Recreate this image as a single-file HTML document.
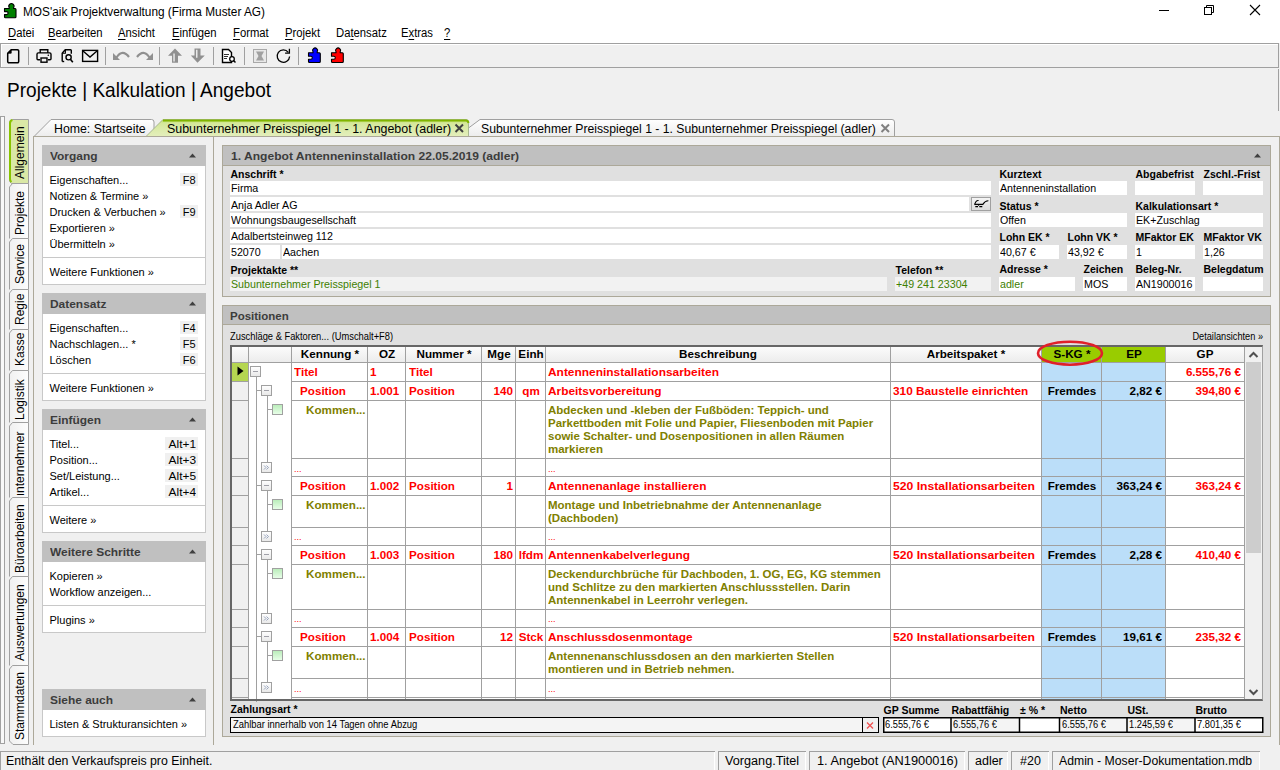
<!DOCTYPE html>
<html><head><meta charset="utf-8"><title>MOS'aik</title>
<style>
html,body{margin:0;padding:0}
body{width:1280px;height:770px;overflow:hidden;position:relative;background:#f0f0f0;font-family:"Liberation Sans",sans-serif;color:#000}
.a{position:absolute;box-sizing:border-box}
.t{white-space:nowrap}
svg{position:absolute;overflow:visible}
</style></head><body>
<div class="a" style="left:0px;top:0px;width:1280px;height:43px;background:#fff"></div>
<svg style="left:0;top:0" width="22" height="22"><path d="M4.5 8.5H9.2V7.6A2.6 2.6 0 1 1 13.6 7.6V8.5H15a1 1 0 0 1 1 1V16.8a1 1 0 0 1-1 1H5.5a1 1 0 0 1-1-1V14.6H6.6a1.5 1.5 0 0 0 0-3H4.5z" fill="#008000" stroke="#000" stroke-width="1.1" stroke-linejoin="round"/></svg>
<div class="a t" style="left:23px;top:6px;font-size:12px;line-height:12px;color:#000;transform:scaleX(0.985);transform-origin:0 0;">MOS&#x27;aik Projektverwaltung (Firma Muster AG)</div>
<div class="a" style="left:1159px;top:10px;width:10px;height:1px;background:#000"></div>
<svg style="left:1200px;top:0" width="20" height="20"><rect x="4.5" y="7.5" width="7" height="7" fill="none" stroke="#000"/><path d="M6.5 7.5v-2h7v7h-2" fill="none" stroke="#000"/></svg>
<svg style="left:1245px;top:0" width="20" height="20"><path d="M5 5L15 15M15 5L5 15" stroke="#000" stroke-width="1.1"/></svg>
<div class="a t" style="left:7.5px;top:27px;font-size:12px;line-height:12px;color:#000;transform:scaleX(0.94);transform-origin:0 0;text-decoration-thickness:1px;text-underline-offset:2px;"><u>D</u>atei</div>
<div class="a t" style="left:48.4px;top:27px;font-size:12px;line-height:12px;color:#000;transform:scaleX(0.94);transform-origin:0 0;text-decoration-thickness:1px;text-underline-offset:2px;"><u>B</u>earbeiten</div>
<div class="a t" style="left:118.2px;top:27px;font-size:12px;line-height:12px;color:#000;transform:scaleX(0.94);transform-origin:0 0;text-decoration-thickness:1px;text-underline-offset:2px;"><u>A</u>nsicht</div>
<div class="a t" style="left:172.2px;top:27px;font-size:12px;line-height:12px;color:#000;transform:scaleX(0.94);transform-origin:0 0;text-decoration-thickness:1px;text-underline-offset:2px;"><u>E</u>infügen</div>
<div class="a t" style="left:233px;top:27px;font-size:12px;line-height:12px;color:#000;transform:scaleX(0.94);transform-origin:0 0;text-decoration-thickness:1px;text-underline-offset:2px;"><u>F</u>ormat</div>
<div class="a t" style="left:285px;top:27px;font-size:12px;line-height:12px;color:#000;transform:scaleX(0.94);transform-origin:0 0;text-decoration-thickness:1px;text-underline-offset:2px;"><u>P</u>rojekt</div>
<div class="a t" style="left:336.3px;top:27px;font-size:12px;line-height:12px;color:#000;transform:scaleX(0.94);transform-origin:0 0;text-decoration-thickness:1px;text-underline-offset:2px;">Da<u>t</u>ensatz</div>
<div class="a t" style="left:401.2px;top:27px;font-size:12px;line-height:12px;color:#000;transform:scaleX(0.94);transform-origin:0 0;text-decoration-thickness:1px;text-underline-offset:2px;">E<u>x</u>tras</div>
<div class="a t" style="left:444.3px;top:27px;font-size:12px;line-height:12px;color:#000;transform:scaleX(0.94);transform-origin:0 0;text-decoration-thickness:1px;text-underline-offset:2px;"><u>?</u></div>
<div class="a" style="left:0px;top:43px;width:1279px;height:25px;border:1px solid #a0a0a0;border-right:none;background:#f0f0f0;box-shadow:inset 1px 1px 0 #fff"></div>
<div class="a" style="left:1278px;top:43px;width:1px;height:25px;background:#a0a0a0"></div>
<div class="a" style="left:28px;top:47px;width:1px;height:18px;background:#a0a0a0"></div>
<div class="a" style="left:105px;top:47px;width:1px;height:18px;background:#a0a0a0"></div>
<div class="a" style="left:159px;top:47px;width:1px;height:18px;background:#a0a0a0"></div>
<div class="a" style="left:213px;top:47px;width:1px;height:18px;background:#a0a0a0"></div>
<div class="a" style="left:244px;top:47px;width:1px;height:18px;background:#a0a0a0"></div>
<div class="a" style="left:298px;top:47px;width:1px;height:18px;background:#a0a0a0"></div>
<svg style="left:0;top:40px" width="30" height="30"><path d="M11.2 9.7h6.3a1.2 1.2 0 0 1 1.2 1.2v10.7a1.2 1.2 0 0 1-1.2 1.2h-8.6a1.2 1.2 0 0 1-1.2-1.2v-8.4z" fill="none" stroke="#000" stroke-width="1.5" stroke-linejoin="round"/><path d="M7.8 13.2l3.4-3.5v3.5z" fill="#000" stroke="#000" stroke-width="0.8" stroke-linejoin="round"/></svg>
<svg style="left:30px;top:40px" width="30" height="30"><path d="M10.2 13v-3.3h7.6v3.3" fill="none" stroke="#000" stroke-width="1.4"/><path d="M10 19.8h-2a1 1 0 0 1-1-1v-4.6a1.3 1.3 0 0 1 1.3-1.3h11.4a1.3 1.3 0 0 1 1.3 1.3v4.6a1 1 0 0 1-1 1h-2" fill="none" stroke="#000" stroke-width="1.4"/><rect x="11" y="18" width="6" height="4.2" fill="none" stroke="#000" stroke-width="1.4"/><circle cx="18.3" cy="15.2" r="0.8" fill="#000"/></svg>
<svg style="left:55px;top:40px" width="30" height="30"><path d="M7.2 21.5v-8.3l3-3.5h5.3a0.8 0.8 0 0 1 0.8 0.8v3.2" fill="none" stroke="#000" stroke-width="1.4" stroke-linejoin="round"/><path d="M7.4 13.2h3v-3.3" fill="none" stroke="#000" stroke-width="1.1"/><path d="M7.2 21.5h2" stroke="#000" stroke-width="1.4"/><circle cx="13.6" cy="17.3" r="2.6" fill="none" stroke="#000" stroke-width="1.4"/><path d="M15.4 19.3l2.4 3" stroke="#000" stroke-width="1.6"/></svg>
<svg style="left:80px;top:40px" width="30" height="30"><rect x="2.6" y="10.4" width="15" height="11" fill="none" stroke="#000" stroke-width="1.4"/><path d="M3 11l7 6l7-6" fill="none" stroke="#000" stroke-width="1.4"/></svg>
<svg style="left:110px;top:40px" width="50" height="30"><path d="M6.5 17.5Q12.5 8.5 19 17" fill="none" stroke="#909090" stroke-width="2.2"/><path d="M3 13v7h7z" fill="#909090"/><path d="M27 17Q33.5 8.5 39.5 17.5" fill="none" stroke="#909090" stroke-width="2.2"/><path d="M43 13v7h-7z" fill="#909090"/></svg>
<svg style="left:160px;top:40px" width="50" height="30"><path d="M8 15.8L15 8.6L22 15.8H18V22.8H12V15.8z" fill="#909090"/><path d="M13.3 13.5h1.5v8h-1.5z" fill="#e8e8e8"/><path d="M34.5 8.6H40.5V15.6H44.8L37.5 22.8L30.8 15.6H34.5z" fill="#909090"/><path d="M36 9.8h1.5v8h-1.5z" fill="#e8e8e8"/></svg>
<svg style="left:215px;top:40px" width="30" height="30"><path d="M7.5 9.5h6l3 3v10h-9z" fill="#fff" stroke="#000" stroke-width="1.4"/><path d="M9 14.5h5M9 16.5h4M9 18.5h3" stroke="#333" stroke-width="1"/><circle cx="17" cy="19" r="2.3" fill="#fff" stroke="#000" stroke-width="1.3"/><path d="M18.5 20.5l2 2" stroke="#000" stroke-width="1.5"/></svg>
<svg style="left:250px;top:40px" width="30" height="30"><rect x="3.5" y="9.5" width="13" height="13" fill="#e8e8e8" stroke="#a8a8a8" stroke-width="1"/><path d="M6 11.5h8l-2.5 4.5l2.5 4.5h-8l2.5-4.5z" fill="#a0a0a0"/></svg>
<svg style="left:270px;top:40px" width="30" height="30"><path d="M18.3 12.3A6.2 6.2 0 1 0 19.6 16.5" fill="none" stroke="#000" stroke-width="1.3"/><path d="M19.4 8.8v4.3h-4.3" fill="none" stroke="#000" stroke-width="1.3"/></svg>
<svg style="left:303px;top:40px" width="24" height="30"><path d="M5.5 12.8H10V11.8A2.5 2.5 0 1 1 14.2 11.8V12.8H16.3a1 1 0 0 1 1 1V21.5a1 1 0 0 1-1 1H6.5a1 1 0 0 1-1-1V19.2H7.8a1.5 1.5 0 0 0 0-3H5.5z" fill="#0000ff" stroke="#000" stroke-width="1.1" stroke-linejoin="round"/></svg>
<svg style="left:326px;top:40px" width="24" height="30"><path d="M5.5 12.8H10V11.8A2.5 2.5 0 1 1 14.2 11.8V12.8H16.3a1 1 0 0 1 1 1V21.5a1 1 0 0 1-1 1H6.5a1 1 0 0 1-1-1V19.2H7.8a1.5 1.5 0 0 0 0-3H5.5z" fill="#ff0000" stroke="#000" stroke-width="1.1" stroke-linejoin="round"/></svg>
<div class="a t" style="left:7px;top:79px;font-size:21px;line-height:21px;color:#000;transform:scaleX(0.907);transform-origin:0 0;">Projekte | Kalkulation | Angebot</div>
<div class="a" style="left:1278px;top:69px;width:1px;height:42px;background:#a0a0a0"></div>
<div class="a" style="left:0px;top:116px;width:5px;height:628px;border:1px solid #a0a0a0;border-top:none;background:#f8f8f8"></div>
<div class="a" style="left:0px;top:116px;width:5px;height:1px;background:#a0a0a0"></div>
<svg style="left:8px;top:182px" width="22" height="57"><path d="M1.5 56.5V5l3-3.5H20.5V56.5" fill="url(#vtg)" stroke="#a0a0a0" stroke-width="1"/></svg>
<svg style="left:8px;top:237px" width="22" height="53"><path d="M1.5 52.5V5l3-3.5H20.5V52.5" fill="url(#vtg)" stroke="#a0a0a0" stroke-width="1"/></svg>
<svg style="left:8px;top:288px" width="22" height="42"><path d="M1.5 41.5V5l3-3.5H20.5V41.5" fill="url(#vtg)" stroke="#a0a0a0" stroke-width="1"/></svg>
<svg style="left:8px;top:328px" width="22" height="43"><path d="M1.5 42.5V5l3-3.5H20.5V42.5" fill="url(#vtg)" stroke="#a0a0a0" stroke-width="1"/></svg>
<svg style="left:8px;top:369px" width="22" height="54"><path d="M1.5 53.5V5l3-3.5H20.5V53.5" fill="url(#vtg)" stroke="#a0a0a0" stroke-width="1"/></svg>
<svg style="left:8px;top:421px" width="22" height="77"><path d="M1.5 76.5V5l3-3.5H20.5V76.5" fill="url(#vtg)" stroke="#a0a0a0" stroke-width="1"/></svg>
<svg style="left:8px;top:496px" width="22" height="81"><path d="M1.5 80.5V5l3-3.5H20.5V80.5" fill="url(#vtg)" stroke="#a0a0a0" stroke-width="1"/></svg>
<svg style="left:8px;top:575px" width="22" height="91"><path d="M1.5 90.5V5l3-3.5H20.5V90.5" fill="url(#vtg)" stroke="#a0a0a0" stroke-width="1"/></svg>
<svg style="left:8px;top:664px" width="22" height="82"><path d="M1.5 77V5l3-3.5H20.5V80.5H5z" fill="url(#vtg)" stroke="#a0a0a0" stroke-width="1"/></svg>
<svg width="0" height="0" style="left:0;top:0"><defs><linearGradient id="vtg" x1="0" x2="1" y1="0" y2="0"><stop offset="0" stop-color="#f0f0f0"/><stop offset="1" stop-color="#fdfdfd"/></linearGradient></defs></svg>
<svg style="left:8px;top:118px" width="22" height="66"><path d="M3.5 65.5q-2-1-2-4V5q0-3.5 3-3.5H20.5V65.5z" fill="#dae8a6" stroke="#a0a0a0" stroke-width="1"/><path d="M3.5 64q-1.5-1-1.5-3V5.5q0-3 2.5-3.5" fill="none" stroke="#88c400" stroke-width="2"/></svg>
<div class="a t" style="left:13.84px;top:179px;font-size:12px;line-height:12px;transform:rotate(-90deg);transform-origin:0 0">Allgemein</div>
<div class="a t" style="left:13.84px;top:235px;font-size:12px;line-height:12px;transform:rotate(-90deg);transform-origin:0 0">Projekte</div>
<div class="a t" style="left:13.84px;top:284px;font-size:12px;line-height:12px;transform:rotate(-90deg);transform-origin:0 0">Service</div>
<div class="a t" style="left:13.84px;top:325px;font-size:12px;line-height:12px;transform:rotate(-90deg);transform-origin:0 0">Regie</div>
<div class="a t" style="left:13.84px;top:366px;font-size:12px;line-height:12px;transform:rotate(-90deg);transform-origin:0 0">Kasse</div>
<div class="a t" style="left:13.84px;top:420px;font-size:12px;line-height:12px;transform:rotate(-90deg);transform-origin:0 0">Logistik</div>
<div class="a" style="left:9px;top:423px;width:19px;height:72px;overflow:hidden"><div class="a t" style="left:5px;top:97.5px;font-size:12px;line-height:12px;transform:rotate(-90deg);transform-origin:0 0">Subunternehmer</div></div>
<div class="a t" style="left:13.84px;top:573px;font-size:12px;line-height:12px;transform:rotate(-90deg);transform-origin:0 0">Büroarbeiten</div>
<div class="a t" style="left:13.84px;top:661px;font-size:12px;line-height:12px;transform:rotate(-90deg);transform-origin:0 0">Auswertungen</div>
<div class="a t" style="left:13.84px;top:740px;font-size:12px;line-height:12px;transform:rotate(-90deg);transform-origin:0 0">Stammdaten</div>
<div class="a" style="left:33px;top:136px;width:1px;height:609px;background:#aca899"></div>
<div class="a" style="left:33px;top:136px;width:1247px;height:1px;background:#aca899"></div>
<div class="a" style="left:1279px;top:136px;width:1px;height:609px;background:#aca899"></div>
<svg style="left:30px;top:115px" width="880" height="24">
<defs>
<linearGradient id="tg1" x1="0" x2="0" y1="0" y2="1"><stop offset="0" stop-color="#ffffff"/><stop offset="1" stop-color="#ececec"/></linearGradient>
<linearGradient id="tg2" x1="0" x2="0" y1="0" y2="1"><stop offset="0" stop-color="#b4d84a"/><stop offset="0.2" stop-color="#d4e79a"/><stop offset="1" stop-color="#e4efbc"/></linearGradient>
</defs>
<path d="M4 21.5L21 4.5H121.5q2.5 0 2.5 2.5V21.5" fill="url(#tg1)" stroke="#a0a0a0" stroke-width="1"/>
<path d="M427 21.5L450 4.5H862q2.5 0 2.5 2.5V21.5" fill="url(#tg1)" stroke="#a0a0a0" stroke-width="1"/>
<path d="M116 21.5L133 4.5H436q2.5 0 2.5 2.5V21.5z" fill="url(#tg2)" stroke="#a8b890" stroke-width="1"/>
<path d="M133 5.5H436q2 0 2.5 2.5" fill="none" stroke="#80b400" stroke-width="2"/>
</svg>
<div class="a" style="left:33px;top:136px;width:1247px;height:1px;background:#aca899"></div>
<div class="a t" style="left:54.2px;top:123px;font-size:12px;line-height:12px;color:#000;transform:scaleX(1.026);transform-origin:0 0;">Home: Startseite</div>
<div class="a t" style="left:166.6px;top:123px;font-size:12px;line-height:12px;color:#000;transform:scaleX(1.036);transform-origin:0 0;">Subunternehmer Preisspiegel 1 - 1. Angebot (adler)</div>
<div class="a t" style="left:481.3px;top:123px;font-size:12px;line-height:12px;color:#000;transform:scaleX(1.017);transform-origin:0 0;">Subunternehmer Preisspiegel 1 - 1. Subunternehmer Preisspiegel (adler)</div>
<svg style="left:454px;top:123px" width="12" height="12"><path d="M1.5 1.5L9 9M9 1.5L1.5 9" stroke="#404040" stroke-width="2"/></svg>
<svg style="left:880px;top:123px" width="12" height="12"><path d="M1.5 1.5L9 9M9 1.5L1.5 9" stroke="#808080" stroke-width="2"/></svg>
<div class="a" style="left:213px;top:137px;width:1px;height:608px;background:#aca899"></div>
<div class="a" style="left:42px;top:145px;width:164px;height:21px;background:#c0c0c0"></div>
<div class="a t" style="left:49.7px;top:151px;font-size:11px;line-height:11px;color:#3c3c3c;font-weight:bold;transform:scaleX(1.085);transform-origin:0 0;">Vorgang</div>
<svg style="left:186px;top:151px" width="12" height="8"><path d="M3 6.5h7l-3.5-4z" fill="#404040"/></svg>
<div class="a" style="left:42px;top:166px;width:164px;height:119px;border:1px solid #c8c8c8;border-top:none;background:#fff"></div>
<div class="a t" style="left:49.5px;top:175px;font-size:11px;line-height:11px;color:#000;">Eigenschaften...</div>
<div class="a" style="left:180px;top:173px;width:18px;height:13px;background:#f0f0f0"></div>
<div class="a t" style="left:155.5px;width:40px;text-align:right;top:175px;font-size:11px;line-height:11px;color:#000;transform:scaleX(1.0);transform-origin:100% 0;">F8</div>
<div class="a t" style="left:49.5px;top:191px;font-size:11px;line-height:11px;color:#000;">Notizen &amp; Termine »</div>
<div class="a t" style="left:49.5px;top:207px;font-size:11px;line-height:11px;color:#000;">Drucken &amp; Verbuchen »</div>
<div class="a" style="left:180px;top:205px;width:18px;height:13px;background:#f0f0f0"></div>
<div class="a t" style="left:155.5px;width:40px;text-align:right;top:207px;font-size:11px;line-height:11px;color:#000;transform:scaleX(1.0);transform-origin:100% 0;">F9</div>
<div class="a t" style="left:49.5px;top:223px;font-size:11px;line-height:11px;color:#000;">Exportieren »</div>
<div class="a t" style="left:49.5px;top:239px;font-size:11px;line-height:11px;color:#000;">Übermitteln »</div>
<div class="a" style="left:43px;top:257px;width:162px;height:1px;background:#c8c8c8"></div>
<div class="a t" style="left:49.5px;top:267px;font-size:11px;line-height:11px;color:#000;">Weitere Funktionen »</div>
<div class="a" style="left:42px;top:293px;width:164px;height:21px;background:#c0c0c0"></div>
<div class="a t" style="left:49.7px;top:299px;font-size:11px;line-height:11px;color:#3c3c3c;font-weight:bold;transform:scaleX(1.085);transform-origin:0 0;">Datensatz</div>
<svg style="left:186px;top:299px" width="12" height="8"><path d="M3 6.5h7l-3.5-4z" fill="#404040"/></svg>
<div class="a" style="left:42px;top:314px;width:164px;height:87px;border:1px solid #c8c8c8;border-top:none;background:#fff"></div>
<div class="a t" style="left:49.5px;top:323px;font-size:11px;line-height:11px;color:#000;">Eigenschaften...</div>
<div class="a" style="left:180px;top:321px;width:18px;height:13px;background:#f0f0f0"></div>
<div class="a t" style="left:155.5px;width:40px;text-align:right;top:323px;font-size:11px;line-height:11px;color:#000;transform:scaleX(1.0);transform-origin:100% 0;">F4</div>
<div class="a t" style="left:49.5px;top:339px;font-size:11px;line-height:11px;color:#000;">Nachschlagen... *</div>
<div class="a" style="left:180px;top:337px;width:18px;height:13px;background:#f0f0f0"></div>
<div class="a t" style="left:155.5px;width:40px;text-align:right;top:339px;font-size:11px;line-height:11px;color:#000;transform:scaleX(1.0);transform-origin:100% 0;">F5</div>
<div class="a t" style="left:49.5px;top:355px;font-size:11px;line-height:11px;color:#000;">Löschen</div>
<div class="a" style="left:180px;top:353px;width:18px;height:13px;background:#f0f0f0"></div>
<div class="a t" style="left:155.5px;width:40px;text-align:right;top:355px;font-size:11px;line-height:11px;color:#000;transform:scaleX(1.0);transform-origin:100% 0;">F6</div>
<div class="a" style="left:43px;top:373px;width:162px;height:1px;background:#c8c8c8"></div>
<div class="a t" style="left:49.5px;top:383px;font-size:11px;line-height:11px;color:#000;">Weitere Funktionen »</div>
<div class="a" style="left:42px;top:409px;width:164px;height:21px;background:#c0c0c0"></div>
<div class="a t" style="left:49.7px;top:415px;font-size:11px;line-height:11px;color:#3c3c3c;font-weight:bold;transform:scaleX(1.085);transform-origin:0 0;">Einfügen</div>
<svg style="left:186px;top:415px" width="12" height="8"><path d="M3 6.5h7l-3.5-4z" fill="#404040"/></svg>
<div class="a" style="left:42px;top:430px;width:164px;height:103px;border:1px solid #c8c8c8;border-top:none;background:#fff"></div>
<div class="a t" style="left:49.5px;top:439px;font-size:11px;line-height:11px;color:#000;">Titel...</div>
<div class="a" style="left:165px;top:437px;width:33px;height:13px;background:#f0f0f0"></div>
<div class="a t" style="left:155.5px;width:40px;text-align:right;top:439px;font-size:11px;line-height:11px;color:#000;transform:scaleX(1.08);transform-origin:100% 0;">Alt+1</div>
<div class="a t" style="left:49.5px;top:455px;font-size:11px;line-height:11px;color:#000;">Position...</div>
<div class="a" style="left:165px;top:453px;width:33px;height:13px;background:#f0f0f0"></div>
<div class="a t" style="left:155.5px;width:40px;text-align:right;top:455px;font-size:11px;line-height:11px;color:#000;transform:scaleX(1.08);transform-origin:100% 0;">Alt+3</div>
<div class="a t" style="left:49.5px;top:471px;font-size:11px;line-height:11px;color:#000;">Set/Leistung...</div>
<div class="a" style="left:165px;top:469px;width:33px;height:13px;background:#f0f0f0"></div>
<div class="a t" style="left:155.5px;width:40px;text-align:right;top:471px;font-size:11px;line-height:11px;color:#000;transform:scaleX(1.08);transform-origin:100% 0;">Alt+5</div>
<div class="a t" style="left:49.5px;top:487px;font-size:11px;line-height:11px;color:#000;">Artikel...</div>
<div class="a" style="left:165px;top:485px;width:33px;height:13px;background:#f0f0f0"></div>
<div class="a t" style="left:155.5px;width:40px;text-align:right;top:487px;font-size:11px;line-height:11px;color:#000;transform:scaleX(1.08);transform-origin:100% 0;">Alt+4</div>
<div class="a" style="left:43px;top:505px;width:162px;height:1px;background:#c8c8c8"></div>
<div class="a t" style="left:49.5px;top:515px;font-size:11px;line-height:11px;color:#000;">Weitere »</div>
<div class="a" style="left:42px;top:541px;width:164px;height:21px;background:#c0c0c0"></div>
<div class="a t" style="left:49.7px;top:547px;font-size:11px;line-height:11px;color:#3c3c3c;font-weight:bold;transform:scaleX(1.085);transform-origin:0 0;">Weitere Schritte</div>
<svg style="left:186px;top:547px" width="12" height="8"><path d="M3 6.5h7l-3.5-4z" fill="#404040"/></svg>
<div class="a" style="left:42px;top:562px;width:164px;height:71px;border:1px solid #c8c8c8;border-top:none;background:#fff"></div>
<div class="a t" style="left:49.5px;top:571px;font-size:11px;line-height:11px;color:#000;">Kopieren »</div>
<div class="a t" style="left:49.5px;top:587px;font-size:11px;line-height:11px;color:#000;">Workflow anzeigen...</div>
<div class="a" style="left:43px;top:605px;width:162px;height:1px;background:#c8c8c8"></div>
<div class="a t" style="left:49.5px;top:615px;font-size:11px;line-height:11px;color:#000;">Plugins »</div>
<div class="a" style="left:42px;top:689px;width:164px;height:21px;background:#c0c0c0"></div>
<div class="a t" style="left:49.7px;top:695px;font-size:11px;line-height:11px;color:#3c3c3c;font-weight:bold;transform:scaleX(1.085);transform-origin:0 0;">Siehe auch</div>
<svg style="left:186px;top:695px" width="12" height="8"><path d="M3 6.5h7l-3.5-4z" fill="#404040"/></svg>
<div class="a" style="left:42px;top:710px;width:164px;height:27px;border:1px solid #c8c8c8;border-top:none;background:#fff"></div>
<div class="a t" style="left:49.5px;top:719px;font-size:11px;line-height:11px;color:#000;">Listen &amp; Strukturansichten »</div>
<div class="a" style="left:0px;top:751px;width:715px;height:19px;border-left:1px solid #a0a0a0;border-top:1px solid #a0a0a0;box-shadow:inset -1px 0 0 #fff"></div>
<div class="a t" style="left:5.5px;top:755px;font-size:12px;line-height:12px;color:#000;transform:scaleX(1.028);transform-origin:0 0;">Enthält den Verkaufspreis pro Einheit.</div>
<div class="a" style="left:718px;top:751px;width:88px;height:19px;border-left:1px solid #a0a0a0;border-top:1px solid #a0a0a0;box-shadow:inset -1px 0 0 #fff"></div>
<div class="a t" style="left:725.3px;top:755px;font-size:12px;line-height:12px;color:#000;transform:scaleX(1.055);transform-origin:0 0;">Vorgang.Titel</div>
<div class="a" style="left:809px;top:751px;width:156px;height:19px;border-left:1px solid #a0a0a0;border-top:1px solid #a0a0a0;box-shadow:inset -1px 0 0 #fff"></div>
<div class="a t" style="left:816.8px;top:755px;font-size:12px;line-height:12px;color:#000;transform:scaleX(1.067);transform-origin:0 0;">1. Angebot (AN1900016)</div>
<div class="a" style="left:968px;top:751px;width:40px;height:19px;border-left:1px solid #a0a0a0;border-top:1px solid #a0a0a0;box-shadow:inset -1px 0 0 #fff"></div>
<div class="a t" style="left:974.9px;top:755px;font-size:12px;line-height:12px;color:#000;transform:scaleX(1.04);transform-origin:0 0;">adler</div>
<div class="a" style="left:1011px;top:751px;width:38px;height:19px;border-left:1px solid #a0a0a0;border-top:1px solid #a0a0a0;box-shadow:inset -1px 0 0 #fff"></div>
<div class="a t" style="left:1019.6px;top:755px;font-size:12px;line-height:12px;color:#000;transform:scaleX(1.04);transform-origin:0 0;">#20</div>
<div class="a" style="left:1052px;top:751px;width:208px;height:19px;border-left:1px solid #a0a0a0;border-top:1px solid #a0a0a0;box-shadow:inset -1px 0 0 #fff"></div>
<div class="a t" style="left:1059.2px;top:755px;font-size:12px;line-height:12px;color:#000;transform:scaleX(1.019);transform-origin:0 0;">Admin - Moser-Dokumentation.mdb</div>
<div class="a" style="left:222px;top:145px;width:1049px;height:152px;border:1px solid #aca899;background:#e0e0e0"></div>
<div class="a" style="left:223px;top:146px;width:1047px;height:20px;background:#c0c0c0;border-bottom:1px solid #aca899"></div>
<div class="a t" style="left:230.5px;top:151px;font-size:11px;line-height:11px;color:#3c3c3c;font-weight:bold;transform:scaleX(1.097);transform-origin:0 0;">1. Angebot Antenneninstallation 22.05.2019 (adler)</div>
<svg style="left:1251px;top:151px" width="12" height="8"><path d="M3 6.5h7l-3.5-4z" fill="#404040"/></svg>
<div class="a t" style="left:230.5px;top:169px;font-size:10.5px;line-height:10.5px;color:#000;font-weight:bold;transform:scaleX(1.0);transform-origin:0 0;">Anschrift *</div>
<div class="a" style="left:230px;top:181px;width:761px;height:14px;background:#fff"></div>
<div class="a t" style="left:230.8px;top:183px;font-size:11px;line-height:11px;color:#000;transform:scaleX(0.97);transform-origin:0 0;">Firma</div>
<div class="a" style="left:230px;top:197px;width:739px;height:14px;background:#fff"></div>
<div class="a t" style="left:230.8px;top:200px;font-size:11px;line-height:11px;color:#000;transform:scaleX(0.97);transform-origin:0 0;">Anja Adler AG</div>
<div class="a" style="left:971px;top:197px;width:20px;height:14px;border:1px solid #a0a0a0;background:linear-gradient(#f4f4f4,#dcdcdc)"></div>
<svg style="left:971px;top:197px" width="20" height="14"><g fill="none" stroke="#000"><path d="M3.8 7.2Q5.2 2.8 7.6 3.6" stroke-width="1.1"/><path d="M3.3 7.4H12.3" stroke-width="1.3"/><path d="M4.3 9.6H7M8.3 9.6H11.3" stroke-width="1.1"/><path d="M7.2 7L7.8 9" stroke-width="0.8"/><path d="M12 7.2Q14.2 3.6 17.4 3.7" stroke-width="1.1"/></g></svg>
<div class="a" style="left:230px;top:213px;width:761px;height:14px;background:#fff"></div>
<div class="a t" style="left:230.8px;top:215px;font-size:11px;line-height:11px;color:#000;transform:scaleX(0.97);transform-origin:0 0;">Wohnungsbaugesellschaft</div>
<div class="a" style="left:230px;top:229px;width:761px;height:14px;background:#fff"></div>
<div class="a t" style="left:230.8px;top:231px;font-size:11px;line-height:11px;color:#000;transform:scaleX(0.97);transform-origin:0 0;">Adalbertsteinweg 112</div>
<div class="a" style="left:230px;top:245px;width:50px;height:14px;background:#fff"></div>
<div class="a t" style="left:230.8px;top:247px;font-size:11px;line-height:11px;color:#000;transform:scaleX(0.97);transform-origin:0 0;">52070</div>
<div class="a" style="left:282px;top:245px;width:709px;height:14px;background:#fff"></div>
<div class="a t" style="left:282.8px;top:247px;font-size:11px;line-height:11px;color:#000;transform:scaleX(0.97);transform-origin:0 0;">Aachen</div>
<div class="a t" style="left:230.5px;top:265px;font-size:10.5px;line-height:10.5px;color:#000;font-weight:bold;transform:scaleX(1.0);transform-origin:0 0;">Projektakte **</div>
<div class="a" style="left:230px;top:277px;width:657px;height:14px;background:#f2f2f2"></div>
<div class="a t" style="left:230.8px;top:279px;font-size:11px;line-height:11px;color:#408000;transform:scaleX(0.97);transform-origin:0 0;">Subunternehmer Preisspiegel 1</div>
<div class="a t" style="left:895.6px;top:265px;font-size:10.5px;line-height:10.5px;color:#000;font-weight:bold;transform:scaleX(1.0);transform-origin:0 0;">Telefon **</div>
<div class="a" style="left:895px;top:277px;width:96px;height:14px;background:#f2f2f2"></div>
<div class="a t" style="left:895.8px;top:279px;font-size:11px;line-height:11px;color:#408000;transform:scaleX(0.97);transform-origin:0 0;">+49 241 23304</div>
<div class="a t" style="left:999.5px;top:169px;font-size:10.5px;line-height:10.5px;color:#000;font-weight:bold;transform:scaleX(1.0);transform-origin:0 0;">Kurztext</div>
<div class="a t" style="left:1135.5px;top:169px;font-size:10.5px;line-height:10.5px;color:#000;font-weight:bold;transform:scaleX(1.0);transform-origin:0 0;">Abgabefrist</div>
<div class="a t" style="left:1203.5px;top:169px;font-size:10.5px;line-height:10.5px;color:#000;font-weight:bold;transform:scaleX(1.0);transform-origin:0 0;">Zschl.-Frist</div>
<div class="a" style="left:999px;top:181px;width:128px;height:14px;background:#fff"></div>
<div class="a t" style="left:999.8px;top:183px;font-size:11px;line-height:11px;color:#000;transform:scaleX(0.97);transform-origin:0 0;">Antenneninstallation</div>
<div class="a" style="left:1135px;top:181px;width:60px;height:14px;background:#fff"></div>
<div class="a" style="left:1203px;top:181px;width:60px;height:14px;background:#fff"></div>
<div class="a t" style="left:999.5px;top:201px;font-size:10.5px;line-height:10.5px;color:#000;font-weight:bold;transform:scaleX(1.0);transform-origin:0 0;">Status *</div>
<div class="a t" style="left:1135.5px;top:201px;font-size:10.5px;line-height:10.5px;color:#000;font-weight:bold;transform:scaleX(1.0);transform-origin:0 0;">Kalkulationsart *</div>
<div class="a" style="left:999px;top:213px;width:128px;height:14px;background:#fff"></div>
<div class="a t" style="left:999.8px;top:215px;font-size:11px;line-height:11px;color:#000;transform:scaleX(0.97);transform-origin:0 0;">Offen</div>
<div class="a" style="left:1135px;top:213px;width:128px;height:14px;background:#fff"></div>
<div class="a t" style="left:1135.8px;top:215px;font-size:11px;line-height:11px;color:#000;transform:scaleX(0.97);transform-origin:0 0;">EK+Zuschlag</div>
<div class="a t" style="left:999.5px;top:232px;font-size:10.5px;line-height:10.5px;color:#000;font-weight:bold;transform:scaleX(1.0);transform-origin:0 0;">Lohn EK *</div>
<div class="a t" style="left:1067.5px;top:232px;font-size:10.5px;line-height:10.5px;color:#000;font-weight:bold;transform:scaleX(1.0);transform-origin:0 0;">Lohn VK *</div>
<div class="a t" style="left:1135.5px;top:232px;font-size:10.5px;line-height:10.5px;color:#000;font-weight:bold;transform:scaleX(1.0);transform-origin:0 0;">MFaktor EK</div>
<div class="a t" style="left:1203.5px;top:232px;font-size:10.5px;line-height:10.5px;color:#000;font-weight:bold;transform:scaleX(1.0);transform-origin:0 0;">MFaktor VK</div>
<div class="a" style="left:999px;top:245px;width:60px;height:14px;background:#fff"></div>
<div class="a t" style="left:999.8px;top:247px;font-size:11px;line-height:11px;color:#000;transform:scaleX(0.97);transform-origin:0 0;">40,67 €</div>
<div class="a" style="left:1067px;top:245px;width:60px;height:14px;background:#fff"></div>
<div class="a t" style="left:1067.8px;top:247px;font-size:11px;line-height:11px;color:#000;transform:scaleX(0.97);transform-origin:0 0;">43,92 €</div>
<div class="a" style="left:1135px;top:245px;width:60px;height:14px;background:#fff"></div>
<div class="a t" style="left:1135.8px;top:247px;font-size:11px;line-height:11px;color:#000;transform:scaleX(0.97);transform-origin:0 0;">1</div>
<div class="a" style="left:1203px;top:245px;width:60px;height:14px;background:#fff"></div>
<div class="a t" style="left:1203.8px;top:247px;font-size:11px;line-height:11px;color:#000;transform:scaleX(0.97);transform-origin:0 0;">1,26</div>
<div class="a t" style="left:999.5px;top:264px;font-size:10.5px;line-height:10.5px;color:#000;font-weight:bold;transform:scaleX(1.0);transform-origin:0 0;">Adresse *</div>
<div class="a t" style="left:1083.5px;top:264px;font-size:10.5px;line-height:10.5px;color:#000;font-weight:bold;transform:scaleX(1.0);transform-origin:0 0;">Zeichen</div>
<div class="a t" style="left:1135.5px;top:264px;font-size:10.5px;line-height:10.5px;color:#000;font-weight:bold;transform:scaleX(1.0);transform-origin:0 0;">Beleg-Nr.</div>
<div class="a t" style="left:1203.5px;top:264px;font-size:10.5px;line-height:10.5px;color:#000;font-weight:bold;transform:scaleX(1.0);transform-origin:0 0;">Belegdatum</div>
<div class="a" style="left:999px;top:277px;width:76px;height:14px;background:#fff"></div>
<div class="a t" style="left:999.8px;top:279px;font-size:11px;line-height:11px;color:#408000;transform:scaleX(0.97);transform-origin:0 0;">adler</div>
<div class="a" style="left:1083px;top:277px;width:44px;height:14px;background:#fff"></div>
<div class="a t" style="left:1083.8px;top:279px;font-size:11px;line-height:11px;color:#000;transform:scaleX(0.97);transform-origin:0 0;">MOS</div>
<div class="a" style="left:1135px;top:277px;width:60px;height:14px;background:#fff"></div>
<div class="a t" style="left:1135.8px;top:279px;font-size:11px;line-height:11px;color:#000;transform:scaleX(0.97);transform-origin:0 0;">AN1900016</div>
<div class="a" style="left:1203px;top:277px;width:60px;height:14px;background:#fff"></div>
<div class="a" style="left:222px;top:305px;width:1049px;height:432px;border:1px solid #aca899;background:#e0e0e0"></div>
<div class="a" style="left:223px;top:306px;width:1047px;height:19px;background:#c0c0c0;border-bottom:1px solid #aca899"></div>
<div class="a t" style="left:230px;top:311px;font-size:11px;line-height:11px;color:#3c3c3c;font-weight:bold;transform:scaleX(1.045);transform-origin:0 0;">Positionen</div>
<div class="a t" style="left:230px;top:332px;font-size:10px;line-height:10px;color:#000;transform:scaleX(0.933);transform-origin:0 0;">Zuschläge &amp; Faktoren... (Umschalt+F8)</div>
<div class="a t" style="left:1143.2px;width:120px;text-align:right;top:332px;font-size:10px;line-height:10px;color:#000;transform:scaleX(0.92);transform-origin:100% 0;">Detailansichten »</div>
<div class="a t" style="left:230.5px;top:704px;font-size:10.5px;line-height:10.5px;color:#000;font-weight:bold;transform:scaleX(1.0);transform-origin:0 0;">Zahlungsart *</div>
<div class="a" style="left:230px;top:717px;width:633px;height:16px;border:1px solid #000;background:#f4f4f4"></div>
<div class="a t" style="left:232.5px;top:720px;font-size:10px;line-height:10px;color:#000;transform:scaleX(0.94);transform-origin:0 0;">Zahlbar innerhalb von 14 Tagen ohne Abzug</div>
<div class="a" style="left:862px;top:717px;width:17px;height:16px;border:1px solid #000;background:#f0f0f0"></div>
<svg style="left:862px;top:717px" width="17" height="16"><path d="M5 5.5l6 6M11 5.5l-6 6" stroke="#f05050" stroke-width="1.3"/></svg>
<div class="a" style="left:883px;top:717px;width:68px;height:16px;background:#fff"></div>
<div class="a t" style="left:883.5px;top:705px;font-size:10.5px;line-height:10.5px;color:#000;font-weight:bold;transform:scaleX(1.0);transform-origin:0 0;">GP Summe</div>
<div class="a t" style="left:885.2px;top:720px;font-size:10px;line-height:10px;color:#000;transform:scaleX(0.93);transform-origin:0 0;">6.555,76 €</div>
<div class="a" style="left:951px;top:717px;width:68.5px;height:16px;background:#f4f4f4"></div>
<div class="a t" style="left:951.5px;top:705px;font-size:10.5px;line-height:10.5px;color:#000;font-weight:bold;transform:scaleX(1.0);transform-origin:0 0;">Rabattfähig</div>
<div class="a t" style="left:953.2px;top:720px;font-size:10px;line-height:10px;color:#000;transform:scaleX(0.93);transform-origin:0 0;">6.555,76 €</div>
<div class="a" style="left:1019.5px;top:717px;width:40.0px;height:16px;background:#fff"></div>
<div class="a t" style="left:1020.0px;top:705px;font-size:10.5px;line-height:10.5px;color:#000;font-weight:bold;transform:scaleX(1.0);transform-origin:0 0;">± % *</div>
<div class="a t" style="left:1021.7px;top:720px;font-size:10px;line-height:10px;color:#000;transform:scaleX(0.93);transform-origin:0 0;"></div>
<div class="a" style="left:1059.5px;top:717px;width:67.5px;height:16px;background:#f4f4f4"></div>
<div class="a t" style="left:1060.0px;top:705px;font-size:10.5px;line-height:10.5px;color:#000;font-weight:bold;transform:scaleX(1.0);transform-origin:0 0;">Netto</div>
<div class="a t" style="left:1061.7px;top:720px;font-size:10px;line-height:10px;color:#000;transform:scaleX(0.93);transform-origin:0 0;">6.555,76 €</div>
<div class="a" style="left:1127px;top:717px;width:68px;height:16px;background:#f4f4f4"></div>
<div class="a t" style="left:1127.5px;top:705px;font-size:10.5px;line-height:10.5px;color:#000;font-weight:bold;transform:scaleX(1.0);transform-origin:0 0;">USt.</div>
<div class="a t" style="left:1129.2px;top:720px;font-size:10px;line-height:10px;color:#000;transform:scaleX(0.93);transform-origin:0 0;">1.245,59 €</div>
<div class="a" style="left:1195px;top:717px;width:68px;height:16px;background:#fff"></div>
<div class="a t" style="left:1195.5px;top:705px;font-size:10.5px;line-height:10.5px;color:#000;font-weight:bold;transform:scaleX(1.0);transform-origin:0 0;">Brutto</div>
<div class="a t" style="left:1197.2px;top:720px;font-size:10px;line-height:10px;color:#000;transform:scaleX(0.93);transform-origin:0 0;">7.801,35 €</div>
<svg style="left:882px;top:716px" width="384" height="18"><g fill="none" stroke="#000" stroke-width="1.5"><rect x="1.75" y="1.75" width="379" height="14.5"/><line x1="69" y1="1" x2="69" y2="17"/><line x1="137.5" y1="1" x2="137.5" y2="17"/><line x1="177.5" y1="1" x2="177.5" y2="17"/><line x1="245" y1="1" x2="245" y2="17"/><line x1="313" y1="1" x2="313" y2="17"/></g></svg>
<div class="a" style="left:230px;top:345px;width:1033px;height:356px;background:#fff"></div>
<div class="a" style="left:1042px;top:362px;width:59px;height:339px;background:#bbdef9"></div>
<div class="a" style="left:1102px;top:362px;width:63px;height:339px;background:#bbdef9"></div>
<div class="a" style="left:232px;top:347px;width:16px;height:354px;background:#f0f0f0"></div>
<div class="a" style="left:232px;top:347px;width:1012px;height:15px;background:linear-gradient(#fbfbfb,#ececec)"></div>
<div class="a" style="left:1042px;top:347px;width:59px;height:15px;background:#99cc00"></div>
<div class="a" style="left:1102px;top:347px;width:63px;height:15px;background:#99cc00"></div>
<div class="a" style="left:232px;top:363px;width:16px;height:18px;background:#b5d651"></div>
<svg style="left:232px;top:363px" width="16" height="18"><path d="M5.5 3.5l6 4.5l-6 4.5z" fill="#000"/></svg>
<div class="a" style="left:232px;top:362px;width:1012px;height:1px;background:#a0a0a0"></div>
<div class="a" style="left:232px;top:381px;width:1012px;height:1px;background:#a0a0a0"></div>
<div class="a" style="left:232px;top:400px;width:1012px;height:1px;background:#a0a0a0"></div>
<div class="a" style="left:232px;top:458px;width:1012px;height:1px;background:#a0a0a0"></div>
<div class="a" style="left:232px;top:476px;width:1012px;height:1px;background:#a0a0a0"></div>
<div class="a" style="left:232px;top:495px;width:1012px;height:1px;background:#a0a0a0"></div>
<div class="a" style="left:232px;top:527px;width:1012px;height:1px;background:#a0a0a0"></div>
<div class="a" style="left:232px;top:545px;width:1012px;height:1px;background:#a0a0a0"></div>
<div class="a" style="left:232px;top:564px;width:1012px;height:1px;background:#a0a0a0"></div>
<div class="a" style="left:232px;top:609px;width:1012px;height:1px;background:#a0a0a0"></div>
<div class="a" style="left:232px;top:627px;width:1012px;height:1px;background:#a0a0a0"></div>
<div class="a" style="left:232px;top:646px;width:1012px;height:1px;background:#a0a0a0"></div>
<div class="a" style="left:232px;top:678px;width:1012px;height:1px;background:#a0a0a0"></div>
<div class="a" style="left:232px;top:697px;width:1012px;height:1px;background:#a0a0a0"></div>
<div class="a" style="left:248px;top:347px;width:1px;height:354px;background:#a0a0a0"></div>
<div class="a" style="left:291px;top:347px;width:1px;height:354px;background:#a0a0a0"></div>
<div class="a" style="left:367px;top:347px;width:1px;height:354px;background:#a0a0a0"></div>
<div class="a" style="left:405px;top:347px;width:1px;height:354px;background:#a0a0a0"></div>
<div class="a" style="left:481px;top:347px;width:1px;height:354px;background:#a0a0a0"></div>
<div class="a" style="left:515px;top:347px;width:1px;height:354px;background:#a0a0a0"></div>
<div class="a" style="left:545px;top:347px;width:1px;height:354px;background:#a0a0a0"></div>
<div class="a" style="left:890px;top:347px;width:1px;height:354px;background:#a0a0a0"></div>
<div class="a" style="left:1041px;top:347px;width:1px;height:354px;background:#a0a0a0"></div>
<div class="a" style="left:1101px;top:347px;width:1px;height:354px;background:#a0a0a0"></div>
<div class="a" style="left:1165px;top:347px;width:1px;height:354px;background:#a0a0a0"></div>
<div class="a" style="left:1244px;top:347px;width:1px;height:354px;background:#a0a0a0"></div>
<div class="a" style="left:249px;top:381px;width:42px;height:1px;background:#fff"></div>
<div class="a" style="left:249px;top:400px;width:42px;height:1px;background:#fff"></div>
<div class="a" style="left:249px;top:458px;width:42px;height:1px;background:#fff"></div>
<div class="a" style="left:249px;top:476px;width:42px;height:1px;background:#fff"></div>
<div class="a" style="left:249px;top:495px;width:42px;height:1px;background:#fff"></div>
<div class="a" style="left:249px;top:527px;width:42px;height:1px;background:#fff"></div>
<div class="a" style="left:249px;top:545px;width:42px;height:1px;background:#fff"></div>
<div class="a" style="left:249px;top:564px;width:42px;height:1px;background:#fff"></div>
<div class="a" style="left:249px;top:609px;width:42px;height:1px;background:#fff"></div>
<div class="a" style="left:249px;top:627px;width:42px;height:1px;background:#fff"></div>
<div class="a" style="left:249px;top:646px;width:42px;height:1px;background:#fff"></div>
<div class="a" style="left:249px;top:678px;width:42px;height:1px;background:#fff"></div>
<div class="a" style="left:249px;top:697px;width:42px;height:1px;background:#fff"></div>
<svg style="left:248px;top:362px" width="44" height="340"><g fill="none" stroke="#a0a0a0" stroke-width="1"><path d="M8.5 15V340"/><path d="M8.5 28.5H13.5"/><path d="M19.5 33.5V105"/><path d="M19.5 47.5H24.5"/><rect x="13.5" y="23.5" width="10" height="10" fill="url(#tgb)"/><rect x="24.5" y="42.5" width="10" height="10" fill="url(#tgg)"/><rect x="13.5" y="100.5" width="10" height="10" fill="url(#tgb)"/><path d="M8.5 123.5H13.5"/><path d="M19.5 128.5V174"/><path d="M19.5 142.5H24.5"/><rect x="13.5" y="118.5" width="10" height="10" fill="url(#tgb)"/><rect x="24.5" y="137.5" width="10" height="10" fill="url(#tgg)"/><rect x="13.5" y="169.5" width="10" height="10" fill="url(#tgb)"/><path d="M8.5 192.5H13.5"/><path d="M19.5 197.5V256"/><path d="M19.5 211.5H24.5"/><rect x="13.5" y="187.5" width="10" height="10" fill="url(#tgb)"/><rect x="24.5" y="206.5" width="10" height="10" fill="url(#tgg)"/><rect x="13.5" y="251.5" width="10" height="10" fill="url(#tgb)"/><path d="M8.5 274.5H13.5"/><path d="M19.5 279.5V325"/><path d="M19.5 293.5H24.5"/><rect x="13.5" y="269.5" width="10" height="10" fill="url(#tgb)"/><rect x="24.5" y="288.5" width="10" height="10" fill="url(#tgg)"/><rect x="13.5" y="320.5" width="10" height="10" fill="url(#tgb)"/><rect x="2.5" y="4.5" width="10" height="10" fill="url(#tgb)"/></g><path d="M16 28.5h5" stroke="#a0a0a8" stroke-width="1"/><path d="M16 103.5l2 2l-2 2M18.5 103.5l2 2l-2 2" fill="none" stroke="#8090b0" stroke-width="0.8"/><path d="M16 123.5h5" stroke="#a0a0a8" stroke-width="1"/><path d="M16 172.5l2 2l-2 2M18.5 172.5l2 2l-2 2" fill="none" stroke="#8090b0" stroke-width="0.8"/><path d="M16 192.5h5" stroke="#a0a0a8" stroke-width="1"/><path d="M16 254.5l2 2l-2 2M18.5 254.5l2 2l-2 2" fill="none" stroke="#8090b0" stroke-width="0.8"/><path d="M16 274.5h5" stroke="#a0a0a8" stroke-width="1"/><path d="M16 323.5l2 2l-2 2M18.5 323.5l2 2l-2 2" fill="none" stroke="#8090b0" stroke-width="0.8"/><path d="M5 9.5h5" stroke="#a0a0a8" stroke-width="1"/><defs><linearGradient id="tgb" x1="0" x2="0" y1="0" y2="1"><stop offset="0" stop-color="#fff"/><stop offset="1" stop-color="#e8e8e8"/></linearGradient><linearGradient id="tgg" x1="0" x2="0" y1="0" y2="1"><stop offset="0" stop-color="#b8ecb8"/><stop offset="1" stop-color="#eaffea"/></linearGradient></defs></svg>
<div class="a" style="left:1245px;top:347px;width:17px;height:354px;background:#f0f0f0"></div>
<div class="a" style="left:1246px;top:362px;width:15px;height:191px;background:#cdcdcd"></div>
<svg style="left:1245px;top:347px" width="17" height="16"><path d="M4.5 10l4-4l4 4" fill="none" stroke="#505050" stroke-width="2"/></svg>
<svg style="left:1245px;top:685px" width="17" height="16"><path d="M4.5 5l4 4l4-4" fill="none" stroke="#505050" stroke-width="2"/></svg>
<div class="a" style="left:230px;top:345px;width:1033px;height:356px;border:2px solid #666;border-right:1px solid #a0a0a0;border-bottom:2px solid #666"></div>
<div class="a t" style="left:229.5px;width:200px;text-align:center;top:349px;font-size:11px;line-height:11px;color:#000;font-weight:bold;transform:scaleX(1.06);transform-origin:50% 0;">Kennung *</div>
<div class="a t" style="left:286.5px;width:200px;text-align:center;top:349px;font-size:11px;line-height:11px;color:#000;font-weight:bold;transform:scaleX(1.06);transform-origin:50% 0;">OZ</div>
<div class="a t" style="left:343.5px;width:200px;text-align:center;top:349px;font-size:11px;line-height:11px;color:#000;font-weight:bold;transform:scaleX(1.06);transform-origin:50% 0;">Nummer *</div>
<div class="a t" style="left:398.5px;width:200px;text-align:center;top:349px;font-size:11px;line-height:11px;color:#000;font-weight:bold;transform:scaleX(1.06);transform-origin:50% 0;">Mge</div>
<div class="a t" style="left:430.5px;width:200px;text-align:center;top:349px;font-size:11px;line-height:11px;color:#000;font-weight:bold;transform:scaleX(1.06);transform-origin:50% 0;">Einh</div>
<div class="a t" style="left:618.0px;width:200px;text-align:center;top:349px;font-size:11px;line-height:11px;color:#000;font-weight:bold;transform:scaleX(1.06);transform-origin:50% 0;">Beschreibung</div>
<div class="a t" style="left:866.0px;width:200px;text-align:center;top:349px;font-size:11px;line-height:11px;color:#000;font-weight:bold;transform:scaleX(1.06);transform-origin:50% 0;">Arbeitspaket *</div>
<div class="a t" style="left:971.5px;width:200px;text-align:center;top:349px;font-size:11px;line-height:11px;color:#000;font-weight:bold;transform:scaleX(1.06);transform-origin:50% 0;">S-KG *</div>
<div class="a t" style="left:1033.5px;width:200px;text-align:center;top:349px;font-size:11px;line-height:11px;color:#000;font-weight:bold;transform:scaleX(1.06);transform-origin:50% 0;">EP</div>
<div class="a t" style="left:1105.0px;width:200px;text-align:center;top:349px;font-size:11px;line-height:11px;color:#000;font-weight:bold;transform:scaleX(1.06);transform-origin:50% 0;">GP</div>
<svg style="left:1030px;top:336px" width="80" height="36"><ellipse cx="40" cy="17.2" rx="32" ry="11.5" fill="none" stroke="#e0202a" stroke-width="2.6"/></svg>
<div class="a t" style="left:294px;top:367px;font-size:11px;line-height:11px;color:#ff0000;font-weight:bold;transform:scaleX(1.06);transform-origin:0 0;">Titel</div>
<div class="a t" style="left:370.3px;top:367px;font-size:11px;line-height:11px;color:#ff0000;font-weight:bold;transform:scaleX(1.06);transform-origin:0 0;">1</div>
<div class="a t" style="left:408.6px;top:367px;font-size:11px;line-height:11px;color:#ff0000;font-weight:bold;transform:scaleX(1.06);transform-origin:0 0;">Titel</div>
<div class="a t" style="left:548px;top:367px;font-size:11px;line-height:11px;color:#ff0000;font-weight:bold;transform:scaleX(1.084);transform-origin:0 0;">Antenneninstallationsarbeiten</div>
<div class="a t" style="left:1161px;width:80px;text-align:right;top:367px;font-size:11px;line-height:11px;color:#ff0000;font-weight:bold;transform:scaleX(1.06);transform-origin:100% 0;">6.555,76 €</div>
<div class="a t" style="left:299.9px;top:386px;font-size:11px;line-height:11px;color:#ff0000;font-weight:bold;transform:scaleX(1.06);transform-origin:0 0;">Position</div>
<div class="a t" style="left:370.3px;top:386px;font-size:11px;line-height:11px;color:#ff0000;font-weight:bold;transform:scaleX(1.06);transform-origin:0 0;">1.001</div>
<div class="a t" style="left:408.6px;top:386px;font-size:11px;line-height:11px;color:#ff0000;font-weight:bold;transform:scaleX(1.06);transform-origin:0 0;">Position</div>
<div class="a t" style="left:472.6px;width:40px;text-align:right;top:386px;font-size:11px;line-height:11px;color:#ff0000;font-weight:bold;transform:scaleX(1.06);transform-origin:100% 0;">140</div>
<div class="a t" style="left:510.5px;width:40px;text-align:center;top:386px;font-size:11px;line-height:11px;color:#ff0000;font-weight:bold;transform:scaleX(1.06);transform-origin:50% 0;">qm</div>
<div class="a t" style="left:548px;top:386px;font-size:11px;line-height:11px;color:#ff0000;font-weight:bold;transform:scaleX(1.08);transform-origin:0 0;">Arbeitsvorbereitung</div>
<div class="a t" style="left:893.1px;top:386px;font-size:11px;line-height:11px;color:#ff0000;font-weight:bold;transform:scaleX(1.074);transform-origin:0 0;">310 Baustelle einrichten</div>
<div class="a t" style="left:1041.5px;width:60px;text-align:center;top:386px;font-size:11px;line-height:11px;color:#000;font-weight:bold;transform:scaleX(1.06);transform-origin:50% 0;">Fremdes</div>
<div class="a t" style="left:1092.2px;width:70px;text-align:right;top:386px;font-size:11px;line-height:11px;color:#000;font-weight:bold;transform:scaleX(1.06);transform-origin:100% 0;">2,82 €</div>
<div class="a t" style="left:1161px;width:80px;text-align:right;top:386px;font-size:11px;line-height:11px;color:#ff0000;font-weight:bold;transform:scaleX(1.06);transform-origin:100% 0;">394,80 €</div>
<div class="a t" style="left:305.9px;top:405px;font-size:11px;line-height:11px;color:#808000;font-weight:bold;transform:scaleX(1.06);transform-origin:0 0;">Kommen...</div>
<div class="a t" style="left:548px;top:405px;font-size:11px;line-height:11px;color:#808000;font-weight:bold;transform:scaleX(1.045);transform-origin:0 0;">Abdecken und -kleben der Fußböden: Teppich- und</div>
<div class="a t" style="left:548px;top:418px;font-size:11px;line-height:11px;color:#808000;font-weight:bold;transform:scaleX(1.045);transform-origin:0 0;">Parkettboden mit Folie und Papier, Fliesenboden mit Papier</div>
<div class="a t" style="left:548px;top:431px;font-size:11px;line-height:11px;color:#808000;font-weight:bold;transform:scaleX(1.045);transform-origin:0 0;">sowie Schalter- und Dosenpositionen in allen Räumen</div>
<div class="a t" style="left:548px;top:444px;font-size:11px;line-height:11px;color:#808000;font-weight:bold;transform:scaleX(1.045);transform-origin:0 0;">markieren</div>
<div class="a t" style="left:294px;top:465px;font-size:9px;line-height:9px;color:#ff0000;transform:scaleX(1.0);transform-origin:0 0;">...</div>
<div class="a t" style="left:548px;top:465px;font-size:9px;line-height:9px;color:#ff0000;transform:scaleX(1.0);transform-origin:0 0;">...</div>
<div class="a t" style="left:299.9px;top:481px;font-size:11px;line-height:11px;color:#ff0000;font-weight:bold;transform:scaleX(1.06);transform-origin:0 0;">Position</div>
<div class="a t" style="left:370.3px;top:481px;font-size:11px;line-height:11px;color:#ff0000;font-weight:bold;transform:scaleX(1.06);transform-origin:0 0;">1.002</div>
<div class="a t" style="left:408.6px;top:481px;font-size:11px;line-height:11px;color:#ff0000;font-weight:bold;transform:scaleX(1.06);transform-origin:0 0;">Position</div>
<div class="a t" style="left:472.6px;width:40px;text-align:right;top:481px;font-size:11px;line-height:11px;color:#ff0000;font-weight:bold;transform:scaleX(1.06);transform-origin:100% 0;">1</div>
<div class="a t" style="left:510.5px;width:40px;text-align:center;top:481px;font-size:11px;line-height:11px;color:#ff0000;font-weight:bold;transform:scaleX(1.06);transform-origin:50% 0;"></div>
<div class="a t" style="left:548px;top:481px;font-size:11px;line-height:11px;color:#ff0000;font-weight:bold;transform:scaleX(1.08);transform-origin:0 0;">Antennenanlage installieren</div>
<div class="a t" style="left:893.1px;top:481px;font-size:11px;line-height:11px;color:#ff0000;font-weight:bold;transform:scaleX(1.105);transform-origin:0 0;">520 Installationsarbeiten</div>
<div class="a t" style="left:1041.5px;width:60px;text-align:center;top:481px;font-size:11px;line-height:11px;color:#000;font-weight:bold;transform:scaleX(1.06);transform-origin:50% 0;">Fremdes</div>
<div class="a t" style="left:1092.2px;width:70px;text-align:right;top:481px;font-size:11px;line-height:11px;color:#000;font-weight:bold;transform:scaleX(1.06);transform-origin:100% 0;">363,24 €</div>
<div class="a t" style="left:1161px;width:80px;text-align:right;top:481px;font-size:11px;line-height:11px;color:#ff0000;font-weight:bold;transform:scaleX(1.06);transform-origin:100% 0;">363,24 €</div>
<div class="a t" style="left:305.9px;top:500px;font-size:11px;line-height:11px;color:#808000;font-weight:bold;transform:scaleX(1.06);transform-origin:0 0;">Kommen...</div>
<div class="a t" style="left:548px;top:500px;font-size:11px;line-height:11px;color:#808000;font-weight:bold;transform:scaleX(1.045);transform-origin:0 0;">Montage und Inbetriebnahme der Antennenanlage</div>
<div class="a t" style="left:548px;top:513px;font-size:11px;line-height:11px;color:#808000;font-weight:bold;transform:scaleX(1.045);transform-origin:0 0;">(Dachboden)</div>
<div class="a t" style="left:294px;top:533px;font-size:9px;line-height:9px;color:#ff0000;transform:scaleX(1.0);transform-origin:0 0;">...</div>
<div class="a t" style="left:548px;top:533px;font-size:9px;line-height:9px;color:#ff0000;transform:scaleX(1.0);transform-origin:0 0;">...</div>
<div class="a t" style="left:299.9px;top:550px;font-size:11px;line-height:11px;color:#ff0000;font-weight:bold;transform:scaleX(1.06);transform-origin:0 0;">Position</div>
<div class="a t" style="left:370.3px;top:550px;font-size:11px;line-height:11px;color:#ff0000;font-weight:bold;transform:scaleX(1.06);transform-origin:0 0;">1.003</div>
<div class="a t" style="left:408.6px;top:550px;font-size:11px;line-height:11px;color:#ff0000;font-weight:bold;transform:scaleX(1.06);transform-origin:0 0;">Position</div>
<div class="a t" style="left:472.6px;width:40px;text-align:right;top:550px;font-size:11px;line-height:11px;color:#ff0000;font-weight:bold;transform:scaleX(1.06);transform-origin:100% 0;">180</div>
<div class="a t" style="left:510.5px;width:40px;text-align:center;top:550px;font-size:11px;line-height:11px;color:#ff0000;font-weight:bold;transform:scaleX(1.06);transform-origin:50% 0;">lfdm</div>
<div class="a t" style="left:548px;top:550px;font-size:11px;line-height:11px;color:#ff0000;font-weight:bold;transform:scaleX(1.08);transform-origin:0 0;">Antennenkabelverlegung</div>
<div class="a t" style="left:893.1px;top:550px;font-size:11px;line-height:11px;color:#ff0000;font-weight:bold;transform:scaleX(1.105);transform-origin:0 0;">520 Installationsarbeiten</div>
<div class="a t" style="left:1041.5px;width:60px;text-align:center;top:550px;font-size:11px;line-height:11px;color:#000;font-weight:bold;transform:scaleX(1.06);transform-origin:50% 0;">Fremdes</div>
<div class="a t" style="left:1092.2px;width:70px;text-align:right;top:550px;font-size:11px;line-height:11px;color:#000;font-weight:bold;transform:scaleX(1.06);transform-origin:100% 0;">2,28 €</div>
<div class="a t" style="left:1161px;width:80px;text-align:right;top:550px;font-size:11px;line-height:11px;color:#ff0000;font-weight:bold;transform:scaleX(1.06);transform-origin:100% 0;">410,40 €</div>
<div class="a t" style="left:305.9px;top:569px;font-size:11px;line-height:11px;color:#808000;font-weight:bold;transform:scaleX(1.06);transform-origin:0 0;">Kommen...</div>
<div class="a t" style="left:548px;top:569px;font-size:11px;line-height:11px;color:#808000;font-weight:bold;transform:scaleX(1.045);transform-origin:0 0;">Deckendurchbrüche für Dachboden, 1. OG, EG, KG stemmen</div>
<div class="a t" style="left:548px;top:582px;font-size:11px;line-height:11px;color:#808000;font-weight:bold;transform:scaleX(1.045);transform-origin:0 0;">und Schlitze zu den markierten Anschlussstellen. Darin</div>
<div class="a t" style="left:548px;top:595px;font-size:11px;line-height:11px;color:#808000;font-weight:bold;transform:scaleX(1.045);transform-origin:0 0;">Antennenkabel in Leerrohr verlegen.</div>
<div class="a t" style="left:294px;top:615px;font-size:9px;line-height:9px;color:#ff0000;transform:scaleX(1.0);transform-origin:0 0;">...</div>
<div class="a t" style="left:548px;top:615px;font-size:9px;line-height:9px;color:#ff0000;transform:scaleX(1.0);transform-origin:0 0;">...</div>
<div class="a t" style="left:299.9px;top:632px;font-size:11px;line-height:11px;color:#ff0000;font-weight:bold;transform:scaleX(1.06);transform-origin:0 0;">Position</div>
<div class="a t" style="left:370.3px;top:632px;font-size:11px;line-height:11px;color:#ff0000;font-weight:bold;transform:scaleX(1.06);transform-origin:0 0;">1.004</div>
<div class="a t" style="left:408.6px;top:632px;font-size:11px;line-height:11px;color:#ff0000;font-weight:bold;transform:scaleX(1.06);transform-origin:0 0;">Position</div>
<div class="a t" style="left:472.6px;width:40px;text-align:right;top:632px;font-size:11px;line-height:11px;color:#ff0000;font-weight:bold;transform:scaleX(1.06);transform-origin:100% 0;">12</div>
<div class="a t" style="left:510.5px;width:40px;text-align:center;top:632px;font-size:11px;line-height:11px;color:#ff0000;font-weight:bold;transform:scaleX(1.06);transform-origin:50% 0;">Stck</div>
<div class="a t" style="left:548px;top:632px;font-size:11px;line-height:11px;color:#ff0000;font-weight:bold;transform:scaleX(1.08);transform-origin:0 0;">Anschlussdosenmontage</div>
<div class="a t" style="left:893.1px;top:632px;font-size:11px;line-height:11px;color:#ff0000;font-weight:bold;transform:scaleX(1.105);transform-origin:0 0;">520 Installationsarbeiten</div>
<div class="a t" style="left:1041.5px;width:60px;text-align:center;top:632px;font-size:11px;line-height:11px;color:#000;font-weight:bold;transform:scaleX(1.06);transform-origin:50% 0;">Fremdes</div>
<div class="a t" style="left:1092.2px;width:70px;text-align:right;top:632px;font-size:11px;line-height:11px;color:#000;font-weight:bold;transform:scaleX(1.06);transform-origin:100% 0;">19,61 €</div>
<div class="a t" style="left:1161px;width:80px;text-align:right;top:632px;font-size:11px;line-height:11px;color:#ff0000;font-weight:bold;transform:scaleX(1.06);transform-origin:100% 0;">235,32 €</div>
<div class="a t" style="left:305.9px;top:651px;font-size:11px;line-height:11px;color:#808000;font-weight:bold;transform:scaleX(1.06);transform-origin:0 0;">Kommen...</div>
<div class="a t" style="left:548px;top:651px;font-size:11px;line-height:11px;color:#808000;font-weight:bold;transform:scaleX(1.045);transform-origin:0 0;">Antennenanschlussdosen an den markierten Stellen</div>
<div class="a t" style="left:548px;top:664px;font-size:11px;line-height:11px;color:#808000;font-weight:bold;transform:scaleX(1.045);transform-origin:0 0;">montieren und in Betrieb nehmen.</div>
<div class="a t" style="left:294px;top:685px;font-size:9px;line-height:9px;color:#ff0000;transform:scaleX(1.0);transform-origin:0 0;">...</div>
<div class="a t" style="left:548px;top:685px;font-size:9px;line-height:9px;color:#ff0000;transform:scaleX(1.0);transform-origin:0 0;">...</div></body></html>
